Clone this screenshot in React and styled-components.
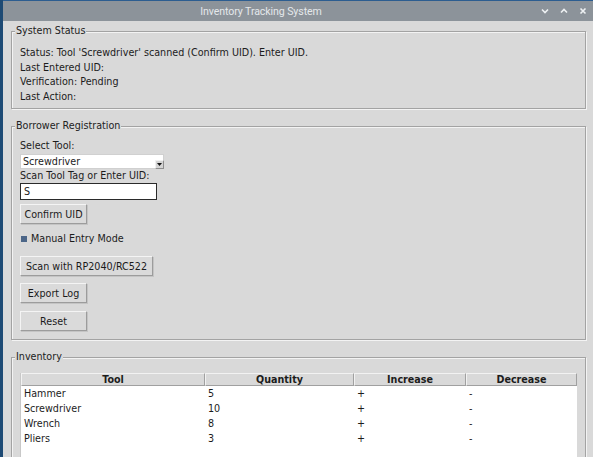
import React from 'react';
import styled, { createGlobalStyle } from 'styled-components';

const GlobalStyle = createGlobalStyle`
  html, body {
    margin: 0;
    padding: 0;
    background: #1d4a74;
    overflow: hidden;
  }
  body {
    font-family: 'DejaVu Sans', 'Liberation Sans', sans-serif;
    font-size: 9.6px;
    color: #1c1c1c;
  }
`;

const statusLines = [
  "Status: Tool 'Screwdriver' scanned (Confirm UID). Enter UID.",
  'Last Entered UID:',
  'Verification: Pending',
  'Last Action:',
];

const inventory = [
  { tool: 'Hammer', qty: 5 },
  { tool: 'Screwdriver', qty: 10 },
  { tool: 'Wrench', qty: 8 },
  { tool: 'Pliers', qty: 3 },
];

const columns = [
  { title: 'Tool', width: 184 },
  { title: 'Quantity', width: 149 },
  { title: 'Increase', width: 112 },
  { title: 'Decrease', width: 111 },
];

const gridTemplate = columns.map(c => `${c.width}px`).join(' ');

const App = () => (
  <>
    <GlobalStyle />
    <Window>
      <TitleBar>
        <Title>Inventory Tracking System</Title>
        <WindowControls>
          <ControlIcon viewBox="0 0 8 8">
            <path d="M1 2.5 L4 5.5 L7 2.5" />
          </ControlIcon>
          <ControlIcon viewBox="0 0 8 8">
            <path d="M1 5.5 L4 2.5 L7 5.5" />
          </ControlIcon>
          <ControlIcon viewBox="0 0 8 8">
            <path d="M1.5 1.5 L6.5 6.5 M6.5 1.5 L1.5 6.5" />
          </ControlIcon>
        </WindowControls>
      </TitleBar>

      <Body>
        <Frame pad="8px 8px 4px 8px">
          <FrameLabel>System Status</FrameLabel>
          <StatusList>
            {statusLines.map(line => (
              <StatusLine key={line}>{line}</StatusLine>
            ))}
          </StatusList>
        </Frame>

        <Frame gap={11} pad="7px 8px 8px 8px">
          <FrameLabel>Borrower Registration</FrameLabel>
          <FormColumn>
            <FieldLabel>Select Tool:</FieldLabel>
            <Combo>
              <ComboText>Screwdriver</ComboText>
              <ComboArrow>
                <svg width="5" height="3" viewBox="0 0 5 3">
                  <path d="M0 0 L5 0 L2.5 3 Z" fill="#111" />
                </svg>
              </ComboArrow>
            </Combo>
            <FieldLabel>Scan Tool Tag or Enter UID:</FieldLabel>
            <Entry>S</Entry>
            <Button space={4} fixed>Confirm UID</Button>
            <CheckRow>
              <CheckMark />
              Manual Entry Mode
            </CheckRow>
            <Button space={10}>Scan with RP2040/RC522</Button>
            <Button space={7} fixed>Export Log</Button>
            <Button space={8} fixed>Reset</Button>
          </FormColumn>
        </Frame>

        <Frame gap={11} pad="10px 8px 0 8px">
          <FrameLabel>Inventory</FrameLabel>
          <Table>
            <HeaderRow>
              {columns.map(c => (
                <HeaderCell key={c.title}>{c.title}</HeaderCell>
              ))}
            </HeaderRow>
            <Rows>
              {inventory.map(item => (
                <Row key={item.tool}>
                  <Cell>{item.tool}</Cell>
                  <Cell>{item.qty}</Cell>
                  <Cell>+</Cell>
                  <Cell>-</Cell>
                </Row>
              ))}
            </Rows>
          </Table>
        </Frame>
      </Body>
    </Window>
  </>
);

const Window = styled.div`
  margin-left: 3px;
  width: 590px;
  height: 457px;
  background: #d9d9d9;
  overflow: hidden;
`;

const TitleBar = styled.div`
  display: flex;
  align-items: center;
  height: 20px;
  border-top: 1px solid #2c5d90;
  background: #8c939a;
`;

const Title = styled.div`
  flex: 1;
  text-align: center;
  font-family: Roboto, 'Liberation Sans', sans-serif;
  font-size: 10.6px;
  color: #e4e8eb;
  letter-spacing: -0.1px;
`;

const WindowControls = styled.div`
  display: flex;
  align-items: center;
  gap: 11px;
  width: 74px;
  box-sizing: border-box;
  justify-content: flex-end;
  padding-right: 6px;
`;

const ControlIcon = styled.svg`
  width: 8px;
  height: 8px;
  fill: none;
  stroke: #eef1f3;
  stroke-width: 1.6;
`;

const Body = styled.div`
  padding: 4px 7px 0 8px;
`;

const Frame = styled.fieldset`
  margin: ${({ gap }) => gap || 0}px 0 0 0;
  padding: ${({ pad }) => pad};
  min-width: 0;
  border: 1px solid #a3a3a3;
  box-shadow: inset 1px 1px 0 #f3f3f3, 1px 1px 0 #f3f3f3;
`;

const FrameLabel = styled.legend`
  margin-left: -5px;
  padding: 0 1px;
  line-height: 12px;
  background: #d9d9d9;
  color: #222;
`;

const StatusList = styled.div`
  display: flex;
  flex-direction: column;
  padding-top: 1px;
`;

const StatusLine = styled.div`
  line-height: 14.5px;
  white-space: nowrap;
`;

const FormColumn = styled.div`
  display: flex;
  flex-direction: column;
  align-items: flex-start;
`;

const FieldLabel = styled.div`
  line-height: 14.5px;
`;

const Combo = styled.div`
  display: flex;
  align-items: stretch;
  width: 144px;
  height: 15px;
  box-sizing: border-box;
  background: #fff;
  border: 1px solid #d0d0d0;
`;

const ComboText = styled.div`
  flex: 1;
  padding-left: 2px;
  line-height: 13px;
`;

const ComboArrow = styled.div`
  align-self: flex-end;
  display: flex;
  align-items: center;
  justify-content: center;
  width: 7px;
  height: 7px;
  margin-bottom: -1px;
  margin-right: -1px;
  background: #d4d4d4;
  border: 1px solid;
  border-color: #f0f0f0 #8e8e8e #8e8e8e #f0f0f0;
`;

const Entry = styled.div`
  width: 137px;
  height: 17px;
  box-sizing: border-box;
  background: #fff;
  border: 1px solid #2a2a2a;
  padding-left: 3px;
  line-height: 15px;
`;

const Button = styled.div`
  margin-top: ${({ space }) => space}px;
  height: 20px;
  box-sizing: border-box;
  ${({ fixed }) => (fixed ? 'width: 67px;' : 'padding: 0 5px;')}
  display: flex;
  align-items: center;
  justify-content: center;
  background: #dadada;
  border: 1px solid;
  border-color: #f4f4f4 #9c9c9c #9c9c9c #f4f4f4;
  box-shadow: 1px 1px 0 #c4c4c4;
  color: #1a1a1a;
  white-space: nowrap;
`;

const CheckRow = styled.div`
  margin-top: 8px;
  display: flex;
  align-items: center;
  gap: 4px;
  line-height: 14px;
  padding-left: 1px;
`;

const CheckMark = styled.span`
  width: 6px;
  height: 6px;
  background: #4c6688;
`;

const Table = styled.div`
  width: 556px;
  background: #fff;
  border-left: 1px solid #c8c8c8;
  height: 120px;
`;

const HeaderRow = styled.div`
  display: grid;
  grid-template-columns: ${gridTemplate};
  height: 13px;
  background: #d9d9d9;
`;

const HeaderCell = styled.div`
  box-sizing: border-box;
  text-align: center;
  font-weight: bold;
  line-height: 11px;
  border: 1px solid;
  border-color: #f2f2f2 #a0a0a0 #a0a0a0 #f2f2f2;
`;

const Rows = styled.div`
  display: flex;
  flex-direction: column;
`;

const Row = styled.div`
  display: grid;
  grid-template-columns: ${gridTemplate};
  line-height: 15px;
`;

const Cell = styled.div`
  padding-left: 3px;
`;

export default App;
